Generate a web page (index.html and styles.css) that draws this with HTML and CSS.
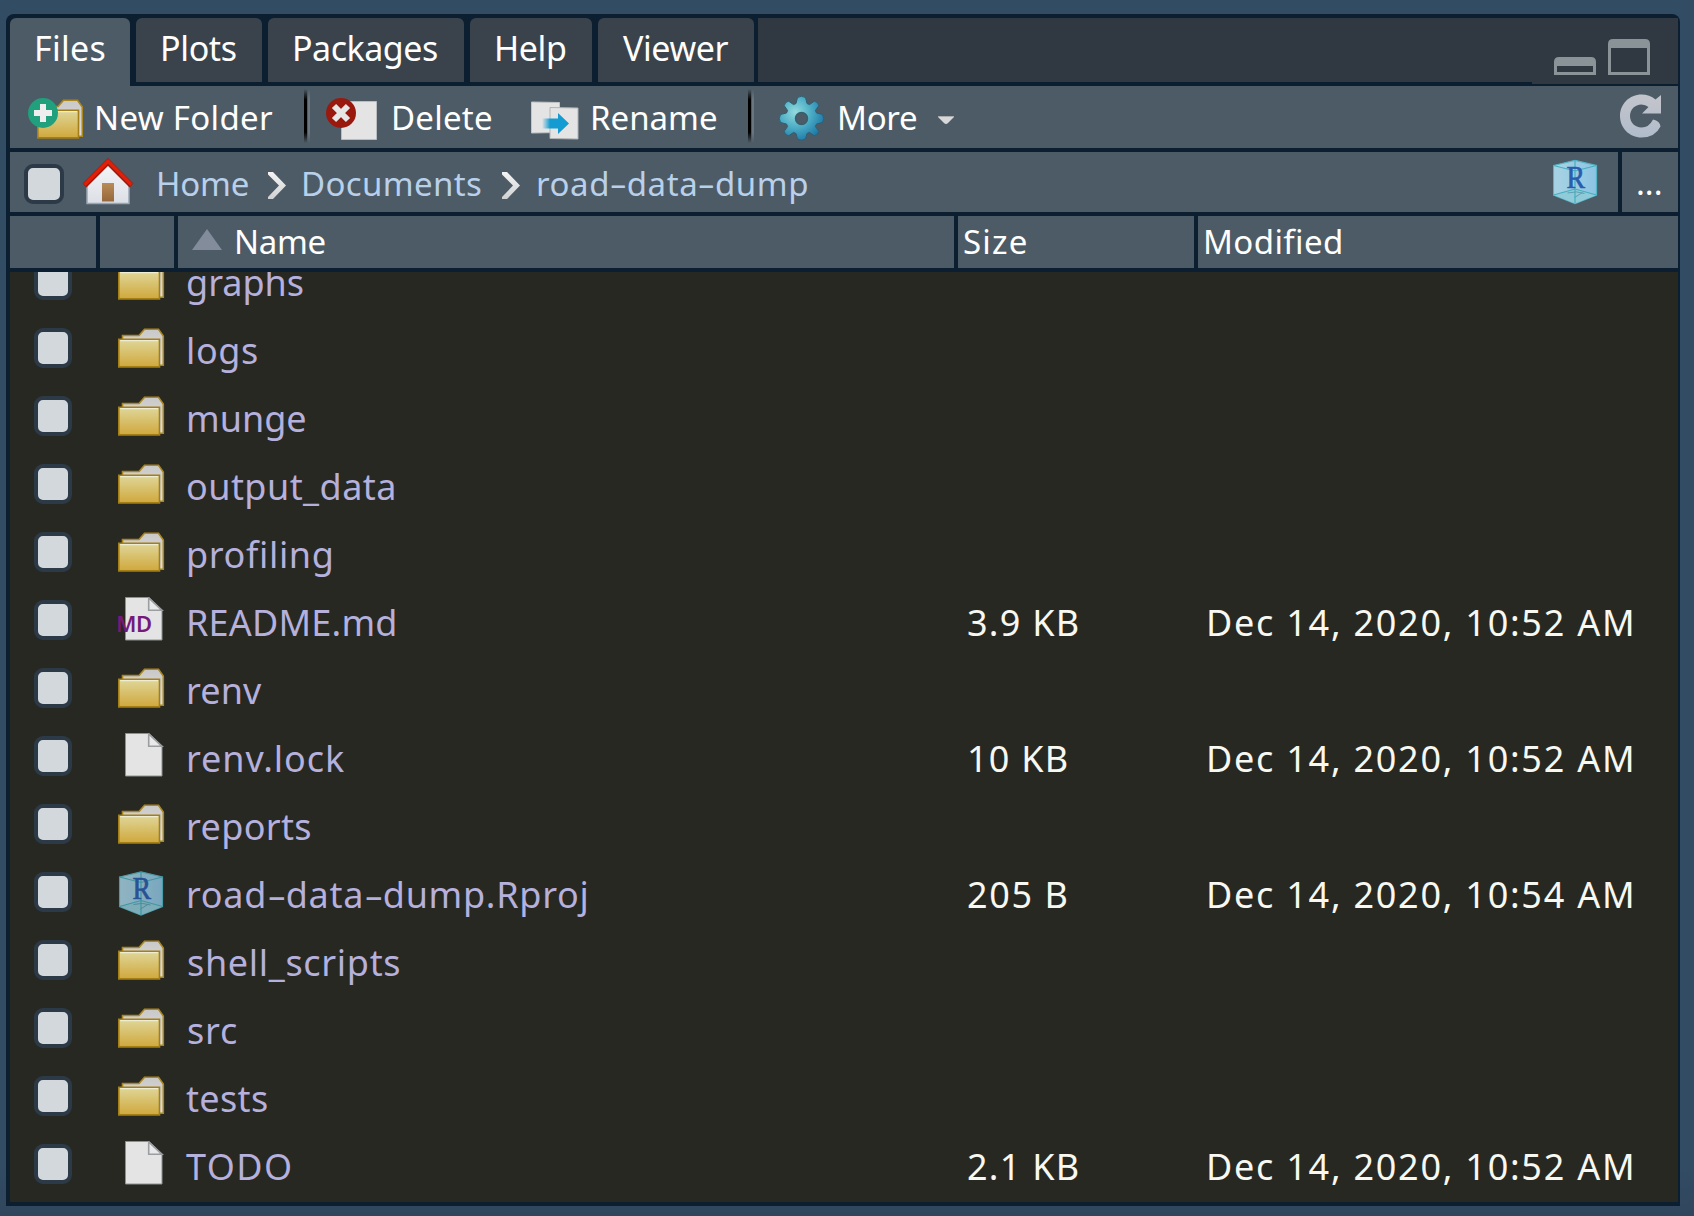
FILE: index.html
```html
<!DOCTYPE html>
<html lang="en">
<head>
<meta charset="utf-8">
<title>Files</title>
<link rel="stylesheet" href="styles.css">
</head>
<body>
<svg class="defs" width="0" height="0" aria-hidden="true">
  <defs>
    <linearGradient id="gold" x1="0" y1="0" x2="0" y2="1"><stop offset="0" stop-color="#dfd79a"/><stop offset="1" stop-color="#d0a83c"/></linearGradient>
    <linearGradient id="paper" x1="0" y1="0" x2="0" y2="1"><stop offset="0" stop-color="#c9c9c9"/><stop offset="1" stop-color="#dedede"/></linearGradient>
    <radialGradient id="gear" cx=".36" cy=".36" r=".68"><stop offset="0" stop-color="#93dadd"/><stop offset=".5" stop-color="#4fafc6"/><stop offset="1" stop-color="#1d7aa8"/></radialGradient>
    <linearGradient id="wall" x1="0" y1="0" x2="0" y2="1"><stop offset="0" stop-color="#f6f6f7"/><stop offset="1" stop-color="#dcdfe6"/></linearGradient>
    <linearGradient id="door" x1="0" y1="0" x2="0" y2="1"><stop offset="0" stop-color="#b98b57"/><stop offset="1" stop-color="#96683a"/></linearGradient>
    <linearGradient id="ice" x1="0" y1="0" x2="1" y2="0"><stop offset="0" stop-color="#a9d3e4"/><stop offset="1" stop-color="#8cc4e3"/></linearGradient>
    <linearGradient id="silver" x1="0" y1="0" x2="0" y2="1"><stop offset="0" stop-color="#c4c5cb"/><stop offset="1" stop-color="#b0bccb"/></linearGradient>
    <linearGradient id="blue" x1="0" y1="0" x2="1" y2="0"><stop offset="0" stop-color="#149cd2" stop-opacity="0"/><stop offset=".3" stop-color="#149cd2"/><stop offset="1" stop-color="#149cd2"/></linearGradient>
    <linearGradient id="chev" x1="0" y1="0" x2="0" y2="1"><stop offset="0" stop-color="#f4f4f4"/><stop offset="1" stop-color="#cfd1d3"/></linearGradient>
    <symbol id="folder" viewBox="0 0 47 41">
      <path d="M4.500 13V7.500H21L26.500 1.200H40.500L45.300 8V37.300H40Z" fill="url(#paper)" stroke="#ab861d" stroke-width="1.600"/>
      <path d="M.8 11.200H41.500V38.900H.8Z" fill="url(#gold)" stroke="#a47f17" stroke-width="1.600"/>
      <path d="M2.200 12.700H40" stroke="#f0ecd0" stroke-width="1.200"/>
    </symbol>
    <symbol id="page" viewBox="0 0 47 46">
      <path d="M7.500 .5H31L44 13.500V43H7.500Z" fill="#e4e4e4" stroke="#8d9092" stroke-width="1"/>
      <path d="M30.700 .8V13.300H44Z" fill="#e9e9e9" stroke="#9b9ea1" stroke-width="1.600"/>
    </symbol>
    <symbol id="rproj" viewBox="0 0 46 46">
      <path d="M1 6L22.500 .8L44 6V35.500L22.500 44L1 35.500Z" fill="url(#ice)" stroke="#55b4c6" stroke-width="1.200"/>
      <path d="M1 35.500L22.500 29.500L44 35.500L22.500 44Z" fill="#8fcbd9"/>
      <path d="M1 6L22.500 11.500L44 6M1 35.500L22.500 29.500L44 35.500M22.500 1V44" fill="none" stroke="#45afbd" stroke-width="1.200"/>
      <path d="M15 33.500Q24 31 32 34M22 38L30 33" stroke="#5f9fb5" fill="none"/>
      <text x="14" y="28" font-family="Liberation Serif, serif" font-size="31" textLength="18.500" lengthAdjust="spacingAndGlyphs" fill="#2a5cae" stroke="#2a5cae" stroke-width=".7">R</text>
    </symbol>
  </defs>
</svg>

<main class="pane">
  <nav class="tabs">
    <div class="tab active files">Files</div>
    <div class="tab plots">Plots</div>
    <div class="tab packages">Packages</div>
    <div class="tab help">Help</div>
    <div class="tab viewer">Viewer</div>
    <div class="strip"></div>
    <div class="window-buttons">
      <svg width="146" height="66" viewBox="1532 18 146 66">
        <path fill="#8a9397" fill-rule="evenodd" d="M1554 75V62Q1554 57 1559 57H1591Q1596 57 1596 62V75ZM1557 66V72H1593V66ZM1608 75V44Q1608 39 1613 39H1645Q1650 39 1650 44V75ZM1611 48V72H1647V48Z"/>
      </svg>
    </div>
  </nav>

  <div class="toolbar">
    <svg width="58" height="62" viewBox="28 86 58 62">
      <use href="#folder" x="37" y="99" width="47" height="41"/>
      <circle cx="43" cy="113" r="15" fill="#20a07c"/>
      <path d="M43 104V122M34 113H52" stroke="#eee" stroke-width="6"/>
    </svg>
    <span class="new-folder">New Folder</span>
    <i class="sep"></i>
    <svg width="58" height="62" viewBox="325 86 58 62">
      <path d="M341.500 101.500H376.500V139.500H341.500Z" fill="#e4e4e4" stroke="#b9bdc0"/>
      <circle cx="341" cy="113" r="15" fill="#99190f"/>
      <path d="M334 106L348 120M348 106L334 120" stroke="#e6e6e6" stroke-width="6"/>
    </svg>
    <span class="delete">Delete</span>
    <svg width="52" height="62" viewBox="529 86 52 62">
      <path d="M530.500 102L558.500 102.500V132.500L530.500 133Z" fill="#e4e4e4" stroke="#c2c5c7"/>
      <path d="M549 107.500L577 108V139L549 138.500Z" fill="#e4e4e4" stroke="#b1b4b6"/>
      <path d="M541 118.500H557V113L568 123.500L557 134V128.500H541Z" fill="url(#blue)"/>
    </svg>
    <span class="rename">Rename</span>
    <i class="sep"></i>
    <svg width="50" height="62" viewBox="777 86 50 62">
      <path d="M796.500 97.500Q800.500 95 804.500 97.500L806 103.500L808.500 104.600L813.300 101.200Q817.500 102 817.800 105.700L814.400 110.500L815.500 113L821.500 114.500Q824 118.500 821.500 122.500L815.500 124L814.400 126.500L817.800 131.300Q817 135.500 813.300 135.800L808.500 132.400L806 133.500L804.500 139Q800.500 141.500 796.500 139L795 133.500L792.500 132.400L787.700 135.800Q783.500 135 783.200 131.300L786.600 126.500L785.500 124L779.500 122.500Q777 118.500 779.500 114.500L785.500 113L786.600 110.500L783.200 105.700Q784 101.500 787.700 101.200L792.500 104.600L795 103.500Z" fill="url(#gear)" stroke="#2f5f73" stroke-width="1"/>
      <circle cx="800.500" cy="118.500" r="6" fill="#4d5b66" stroke="#35606f" stroke-width="1.500"/>
    </svg>
    <span class="more">More</span>
    <svg width="20" height="62" viewBox="936 86 20 62"><path d="M938 117H954L948 123Q946 125 944 123Z" fill="#d8d8d8"/><path d="M938 116.500H954" stroke="#a9adb0"/></svg>
    <svg class="refresh" width="48" height="62" viewBox="1618 86 48 62">
      <path d="M1660.500 126.500Q1655 137.500 1641.500 137.500C1629.500 137.500 1620 128 1620 116C1620 104 1629.500 94.500 1641.500 94.500Q1649.500 94.500 1655.500 99.500L1661 95V113.500H1642L1648.500 107Q1645.500 104.500 1641.500 104.500C1635 104.500 1630 109.500 1630 116C1630 122.500 1635 127.500 1641.500 127.500Q1649 127.500 1653 119.500Q1660 121 1660.500 126.500Z" fill="url(#silver)"/>
    </svg>
  </div>

  <div class="pathbar">
    <div class="crumbs">
      <span class="check big"></span>
      <svg width="52" height="60" viewBox="82 152 52 60">
        <path d="M87 184L108 162L129 184V203.500H87Z" fill="url(#wall)" stroke="#9aa7b3" stroke-width="1.500"/>
        <path d="M102 183H114V201.500H102Z" fill="url(#door)"/>
        <path d="M84.500 185.500L108 162L131.500 185.500" fill="none" stroke="#9d1a0c" stroke-width="5.500"/>
        <path d="M84.500 184.800L108 161.300L131.500 184.800" fill="none" stroke="#e01f08" stroke-width="3.500"/>
      </svg>
      <span class="home">Home</span>
      <svg width="20" height="60" viewBox="267 152 20 60"><path d="M268 172H273L286 185.500L273 199H268V197L279 185.500L268 174.500Z" fill="url(#chev)"/></svg>
      <span class="documents">Documents</span>
      <svg width="20" height="60" viewBox="501 152 20 60"><path d="M502 172H507L520 185.500L507 199H502V197L513 185.500L502 174.500Z" fill="url(#chev)"/></svg>
      <span class="dump">road<b class="hy">-</b>data<b class="hy">-</b>dump</span>
      <svg width="46" height="60" viewBox="1553 152 46 60"><use href="#rproj" x="1552.500" y="159.500" width="46" height="46"/></svg>
    </div>
    <div class="browse">...</div>
  </div>

  <div class="columns">
    <div></div>
    <div></div>
    <div class="col-name"><svg width="31" height="52" viewBox="192 216 31 52"><path d="M192 250L207 229L222 250Z" fill="#838c9a"/></svg><span>Name</span></div>
    <div class="col-size">Size</div>
    <div class="col-modified">Modified</div>
  </div>

  <div class="list">
    <div class="row"><span class="check"></span><svg class="ico"><use href="#folder" y="14" width="47" height="41"/></svg><span class="name graphs">graphs</span></div>
    <div class="row"><span class="check"></span><svg class="ico"><use href="#folder" y="14" width="47" height="41"/></svg><span class="name logs">logs</span></div>
    <div class="row"><span class="check"></span><svg class="ico"><use href="#folder" y="14" width="47" height="41"/></svg><span class="name munge">munge</span></div>
    <div class="row"><span class="check"></span><svg class="ico"><use href="#folder" y="14" width="47" height="41"/></svg><span class="name output">output_data</span></div>
    <div class="row"><span class="check"></span><svg class="ico"><use href="#folder" y="14" width="47" height="41"/></svg><span class="name profiling">profiling</span></div>
    <div class="row"><span class="check"></span><svg class="ico"><use href="#page" y="11" width="47" height="46"/><text x="-2" y="46" class="md">MD</text></svg><span class="name readme">README.md</span><span class="size">3.9 KB</span><span class="date">Dec 14, 2020, 10:52 AM</span></div>
    <div class="row"><span class="check"></span><svg class="ico"><use href="#folder" y="14" width="47" height="41"/></svg><span class="name renv">renv</span></div>
    <div class="row"><span class="check"></span><svg class="ico"><use href="#page" y="11" width="47" height="46"/></svg><span class="name lock">renv.lock</span><span class="size">10 KB</span><span class="date">Dec 14, 2020, 10:52 AM</span></div>
    <div class="row"><span class="check"></span><svg class="ico"><use href="#folder" y="14" width="47" height="41"/></svg><span class="name reports">reports</span></div>
    <div class="row"><span class="check"></span><svg class="ico"><use href="#rproj" x=".5" y="13" width="46" height="46" opacity=".82"/></svg><span class="name project">road<b class="hy">-</b>data<b class="hy">-</b>dump.Rproj</span><span class="size bytes">205 B</span><span class="date">Dec 14, 2020, 10:54 AM</span></div>
    <div class="row"><span class="check"></span><svg class="ico"><use href="#folder" y="14" width="47" height="41"/></svg><span class="name scripts">shell_scripts</span></div>
    <div class="row"><span class="check"></span><svg class="ico"><use href="#folder" y="14" width="47" height="41"/></svg><span class="name src">src</span></div>
    <div class="row"><span class="check"></span><svg class="ico"><use href="#folder" y="14" width="47" height="41"/></svg><span class="name tests">tests</span></div>
    <div class="row"><span class="check"></span><svg class="ico"><use href="#page" y="11" width="47" height="46"/></svg><span class="name todo">TODO</span><span class="size">2.1 KB</span><span class="date">Dec 14, 2020, 10:52 AM</span></div>
  </div>
</main>
</body>
</html>
```
FILE: styles.css
```css
* { box-sizing: border-box; }

body {
  margin: 0;
  height: 1216px;
  padding: 14px 14px 10px 6px;
  background: linear-gradient(#324c63 96%, #30465d);
  font-family: "Noto Sans", sans-serif;
  font-size: 33px;
  color: #fff;
  white-space: nowrap;
  overflow: hidden;
}

svg { display: block; }
.defs { position: absolute; }

.pane {
  height: 1192px;
  display: flex;
  flex-direction: column;
  gap: 4px;
  padding: 4px 2px 4px 4px;
  background: #0b1f30;
  border-radius: 8px 8px 0 0;
}

/* Tabs */
.tabs { height: 68px; display: flex; margin-bottom: -4px; }
.tab {
  height: 64px;
  margin-right: 6px;
  padding-left: 24px;
  background: #3a434b;
  border-radius: 6px 6px 0 0;
  font-size: 34px;
  line-height: 60px;
}
.tab.active { height: 68px; background: #4d5b66; }
.files { width: 120px; letter-spacing: .3px; }
.plots { width: 126px; letter-spacing: -.35px; }
.packages { width: 196px; letter-spacing: -.47px; }
.help { width: 122px; letter-spacing: -.38px; }
.viewer { width: 156px; margin-right: 4px; padding-left: 25px; letter-spacing: -.4px; }
.strip { flex: 1; height: 64px; background: #303841; }
.window-buttons { height: 66px; background: #303841; }

/* Toolbar */
.toolbar {
  height: 62px;
  display: grid;
  grid-template-columns: 66px 210px 21px 66px 139px 60px 158px 30px 59px 99px 682px auto;
  padding-left: 18px;
  background: #4d5b66;
  line-height: 64px;
}
.sep {
  width: 6px;
  height: 54px;
  margin-top: 3px;
  background:
    linear-gradient(transparent, #000 20%, #000 80%, transparent) 0 0 / 3px 100% no-repeat,
    linear-gradient(transparent, #6b7780 20%, #6b7780 80%, transparent) 4px 0 / 2px 100% no-repeat;
}
.new-folder { letter-spacing: .33px; }
.delete { letter-spacing: .25px; }
.more { letter-spacing: -.29px; }

/* Path bar */
.pathbar { height: 60px; display: flex; gap: 4px; }
.crumbs {
  width: 1608px;
  display: grid;
  grid-template-columns: 58px 74px 111px 34px 200px 34px 1018px auto;
  padding-left: 14px;
  background: #4d5b66;
  color: #b9d0ea;
  line-height: 64px;
}
.home { letter-spacing: -.2px; }
.documents { letter-spacing: .37px; }
.dump { padding-left: 1px; letter-spacing: .58px; }
.browse { flex: 1; padding-left: 14px; background: #4d5b66; line-height: 61px; }

.check {
  width: 38px;
  height: 40px;
  margin-top: 14px;
  background: #d3d8dc;
  border: 4px solid #2c3a48;
  border-radius: 9px;
}
.check.big { width: 40px; margin-top: 12px; }

.hy {
  display: inline-block;
  margin: 0 3px;
  font-weight: 400;
  letter-spacing: 0;
  transform: scaleX(1.65);
}

/* Column headings */
.columns {
  height: 52px;
  display: grid;
  grid-template-columns: 86px 74px 776px 236px 1fr;
  gap: 4px;
  line-height: 52px;
}
.columns > div { background: #4d5b66; }
.col-name { display: flex; gap: 11px; padding-left: 14px; letter-spacing: -.3px; }
.col-size { padding-left: 5px; letter-spacing: 1.2px; }
.col-modified { padding-left: 5px; letter-spacing: .4px; }

/* File list */
.list { flex: 1; overflow: hidden; background: #272822; }
.row {
  height: 68px;
  display: grid;
  grid-template-columns: 84px 68px 781px 239px 1fr;
  padding-left: 24px;
  font-size: 36px;
  line-height: 74px;
}
.row:first-child { margin-top: -26px; }
.ico { width: 48px; height: 68px; }
.md { font-size: 22px; font-weight: 600; fill: #741a7c; letter-spacing: -.5px; }
.name { color: #b5b0dc; }
.size, .date { color: #f8f8f2; }
.size { letter-spacing: 1.25px; }
.bytes { letter-spacing: 1.6px; }
.date { letter-spacing: 1.75px; }
.logs { letter-spacing: .6px; }
.output { letter-spacing: .45px; }
.profiling { letter-spacing: .65px; }
.readme { letter-spacing: .2px; }
.renv { letter-spacing: .1px; }
.lock { letter-spacing: .93px; }
.reports { letter-spacing: .35px; }
.project { letter-spacing: .72px; }
.project .hy { margin: 0 3.5px; }
.scripts { padding-left: 1px; letter-spacing: .68px; }
.src { padding-left: 1px; letter-spacing: .8px; }
.tests { letter-spacing: .36px; }
.todo { letter-spacing: 1.44px; }
```
